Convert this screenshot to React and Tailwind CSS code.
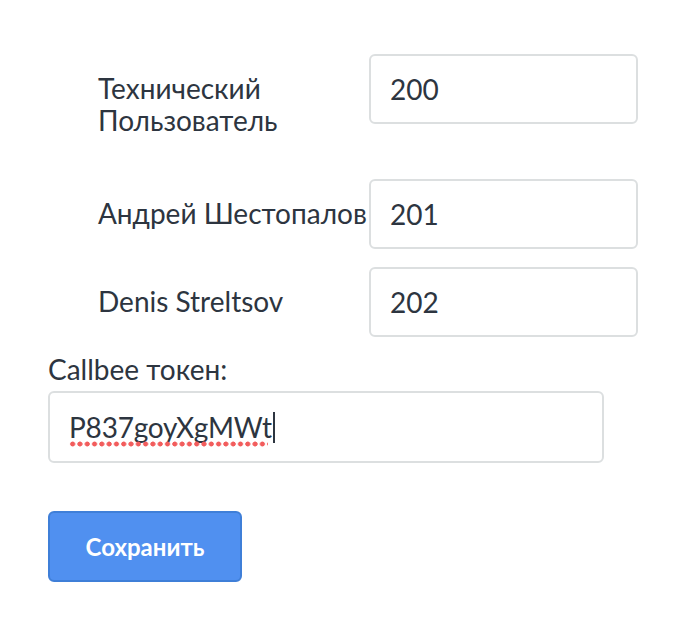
import React from "react";

const users = [
  { name: "Технический Пользователь", ext: "200" },
  { name: "Андрей Шестопалов", ext: "201" },
  { name: "Denis Streltsov", ext: "202" },
];

function Field({ value, className = "" }) {
  return (
    <div
      className={
        "h-[70px] flex items-center px-[19px] border-2 border-[#dcdfe0] rounded-[6px] bg-white " +
        className
      }
    >
      {value}
    </div>
  );
}

export default function App() {
  return (
    <div
      className="min-h-screen bg-white text-[#2d3540] text-[28px] leading-[32px] pl-[48px] pt-[54px]"
      style={{ fontFamily: "Lato, 'Noto Sans', sans-serif" }}
    >
      {/* extensions */}
      <div className="flex flex-col gap-[18px] pl-[50px]">
        {users.map((u, i) => (
          <div key={u.ext} className={"flex items-start " + (i === 0 ? "h-[107px]" : "")}>
            <div className={"w-[271px] pt-[18px] " + (i === 0 ? "" : "whitespace-nowrap")}>
              {u.name}
            </div>
            <Field value={u.ext} className="w-[269px]" />
          </div>
        ))}
      </div>

      {/* token */}
      <div className="mt-[16px]">
        <div className="mb-[6px]">Callbee токен:</div>
        <div className="w-[556px] h-[72px] flex items-center px-[19px] border-2 border-[#dcdfe0] rounded-[6px]">
          <span className="relative tracking-[-0.2px]">
            P837goyXgMWt
            {/* spellcheck dots */}
            <span className="absolute left-0 right-[4px] bottom-[-4px] h-[6px] bg-[radial-gradient(circle,#f25c5c_2.2px,transparent_2.8px)] bg-[length:7.3px_6px] bg-repeat-x" />
          </span>
          <span className="ml-[1px] w-[2px] h-[31px] bg-[#2d3540]" />
        </div>
      </div>

      {/* save */}
      <button className="mt-[48px] w-[194px] h-[71px] rounded-[6px] bg-[#5090f0] border-2 border-[#3f7fd8] text-white font-bold text-[24px]">
        Сохранить
      </button>
    </div>
  );
}
